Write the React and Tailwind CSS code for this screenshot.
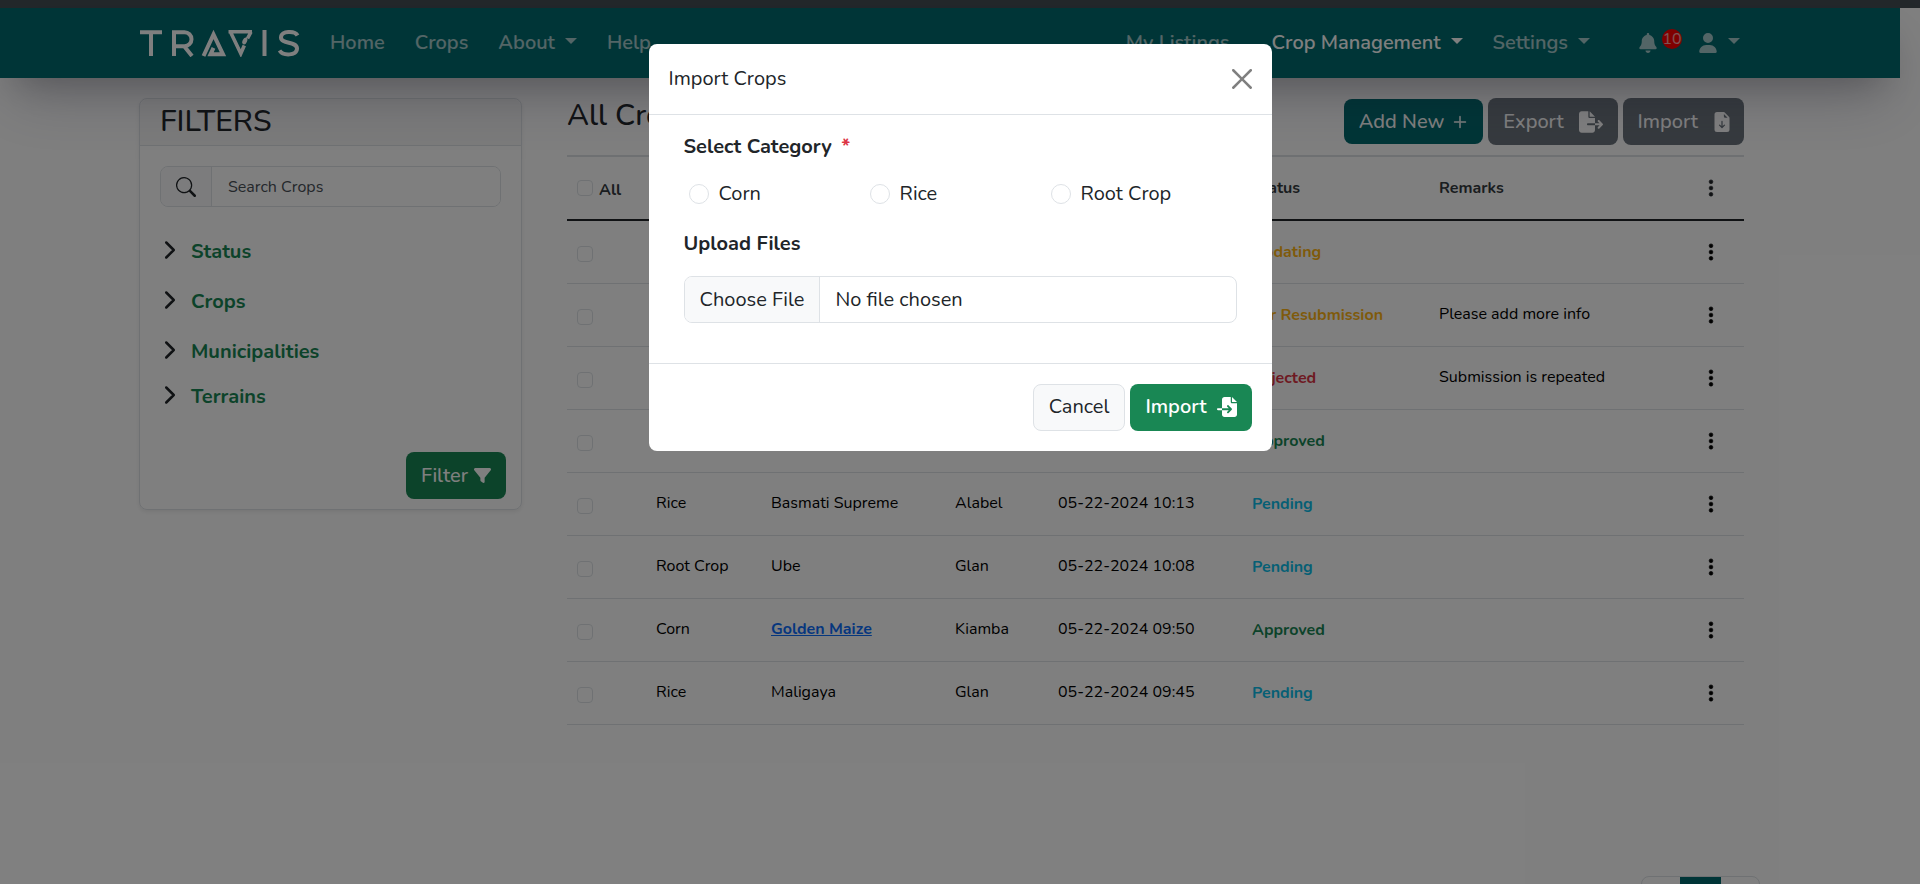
import { FaBell, FaUser, FaFilter, FaFileExport, FaFileImport } from "react-icons/fa6";
import { BsSearch, BsChevronRight, BsThreeDotsVertical, BsPlusLg, BsFileEarmarkArrowDownFill } from "react-icons/bs";

const rows = [
  { status: "Updating" },
  { status: "For Resubmission", remarks: "Please add more info" },
  { status: "Rejected", remarks: "Submission is repeated" },
  { status: "Approved" },
  { crop: "Rice", name: "Basmati Supreme", place: "Alabel", date: "05-22-2024 10:13", status: "Pending" },
  { crop: "Root Crop", name: "Ube", place: "Glan", date: "05-22-2024 10:08", status: "Pending" },
  { crop: "Corn", name: "Golden Maize", place: "Kiamba", date: "05-22-2024 09:50", status: "Approved", link: true },
  { crop: "Rice", name: "Maligaya", place: "Glan", date: "05-22-2024 09:45", status: "Pending" },
];

const statusColor = {
  Updating: "text-[#ffb514]",
  "For Resubmission": "text-[#ffb514]",
  Rejected: "text-[#dc3545]",
  Approved: "text-[#198754]",
  Pending: "text-[#0dbeea]",
};

const check = "block size-4 appearance-none rounded border border-[#dee2e6] bg-white";
const cell = "pb-0.5 pl-2.5";

function Caret() {
  return <span className="mb-1 border-x-6 border-t-6 border-x-transparent border-t-current" />;
}

function Logo() {
  return (
    <svg width="160" height="28" viewBox="0 0 160 28" fill="none" stroke="#fff" strokeWidth="4" role="img" aria-label="Travis">
      <path d="M0 3.200H22M11 3V27M34 27V3.200H44.500a6.300 6.300 0 0 1 0 14H34M44 17l8 10" />
      <path d="M63.500 27L73.500 5.500 83 25.300H70.500l3-6.500" />
      <path d="M88.500 2.800H112M90.500 3L100.800 24.500l3.500-8M111 3l-3.500 6.500" strokeWidth="3.600" />
      <ellipse cx="104.800" cy="12" rx="2.200" ry="3.600" transform="rotate(25 104.800 12)" fill="#fff" stroke="none" />
      <path d="M124.500 1V27M157.500 6.500C155 1.500 141 1.500 141 8.500c0 7 16 3.500 16 11 0 7.500-14 7.500-17.500 2" />
    </svg>
  );
}

function CloseIcon() {
  return (
    <svg viewBox="0 0 16 16" fill="currentColor" className="size-5" aria-hidden="true">
      <path d="M.293.293a1 1 0 0 1 1.414 0L8 6.586 14.293.293a1 1 0 1 1 1.414 1.414L9.414 8l6.293 6.293a1 1 0 0 1-1.414 1.414L8 9.414l-6.293 6.293a1 1 0 0 1-1.414-1.414L6.586 8 .293 1.707a1 1 0 0 1 0-1.414z" />
    </svg>
  );
}

function Navbar() {
  return (
    <nav className="relative mr-5 flex h-[70px] items-center bg-[#006a6e] pr-40 pl-[140px] text-xl font-semibold text-white/65 shadow-[0_30px_60px_-12px_rgba(50,50,93,0.25),0_18px_36px_-18px_rgba(0,0,0,0.3)]">
      <a href="#home" className="mr-[30px]"><Logo /></a>
      <div className="flex grow items-center gap-[30px]">
        <a href="#home">Home</a>
        <a href="#crops">Crops</a>
        <a href="#about" className="flex items-center gap-2.5">About <Caret /></a>
        <a href="#help">Help</a>
      </div>
      <div className="flex items-center gap-[30px]">
        <a href="#listings" className="mr-3">My Listings</a>
        <a href="#management" className="flex items-center gap-2.5 text-white">Crop Management <Caret /></a>
        <a href="#settings" className="mr-12 flex items-center gap-2.5">Settings <Caret /></a>
      </div>
      <div className="flex items-center gap-4">
        <a href="#alerts" aria-label="Notifications" className="flex gap-1">
          <FaBell className="size-5" />
          <span className="-mt-1 flex size-5 items-center justify-center rounded-full bg-[#ff0000] text-base font-normal">10</span>
        </a>
        <a href="#account" aria-label="Account" className="flex items-center gap-2.5"><FaUser className="size-5" /><Caret /></a>
      </div>
    </nav>
  );
}

function Filters() {
  return (
    <aside className="h-[412px] w-[383px] shrink-0 rounded-lg border border-[#dee2e6] shadow-[0_2px_4px_rgba(0,0,0,0.075)]">
      <h2 className="h-[47px] rounded-t-lg border-b border-[#dee2e6] bg-black/3 px-5 text-[30px] leading-[46px] font-medium">FILTERS</h2>
      <form>
        <div className="mx-5 mt-5 flex h-[41px] overflow-hidden rounded-lg border border-[#dee2e6]">
          <label htmlFor="search" aria-label="Search" className="flex w-[51px] items-center justify-center border-r border-[#dee2e6] bg-[#f8f9fa]">
            <BsSearch className="size-5" />
          </label>
          <input id="search" placeholder="Search Crops" className="min-w-0 grow bg-white px-4 text-base placeholder:text-[#495057]" />
        </div>
        <div className="mx-5 mt-[30px] flex flex-col items-start text-xl leading-[30px] font-bold text-[#198754]">
          {["Status", "Crops", "Municipalities", "Terrains"].map((t) => (
            <button type="button" key={t} className="mb-5 flex items-center gap-[11px] last:-mt-[5px]">
              <BsChevronRight className="mb-1 size-5 stroke-1 text-[#212529]" />{t}
            </button>
          ))}
        </div>
        <div className="mt-5 flex justify-end px-[15px]">
          <button type="button" className="flex h-[47px] items-center gap-1.5 rounded-lg bg-[#198754] px-[15px] text-xl font-medium text-white">
            Filter <FaFilter className="size-[17px]" />
          </button>
        </div>
      </form>
    </aside>
  );
}

function Listing() {
  return (
    <main className="min-w-0 grow">
      <div className="flex h-[59px] items-start justify-between border-b-2 border-[#dee2e6]">
        <h1 className="text-[30px] leading-9 font-medium">All Crops</h1>
        <div className="flex items-center gap-[5px] text-xl text-white">
          <button className="flex h-[45px] items-center gap-2 rounded-lg bg-[#006a6e] px-[15px] font-medium">Add New <BsPlusLg className="size-4 stroke-[0.5]" /></button>
          <button className="flex h-[47px] items-center gap-[15px] rounded-lg bg-[#6c757d] px-[15px] font-medium">Export <FaFileExport className="size-6" /></button>
          <button className="flex h-[47px] items-center gap-3.5 rounded-lg bg-[#6c757d] pr-3 pl-[15px] font-medium">Import <BsFileEarmarkArrowDownFill className="size-5" /></button>
        </div>
      </div>
      <table className="w-full table-fixed border-collapse text-left text-base text-black">
        <colgroup>
          <col className="w-[79px]" />
          <col className="w-[115px]" />
          <col className="w-[184px]" />
          <col className="w-[103px]" />
          <col className="w-[194px]" />
          <col className="w-[187px]" />
          <col />
          <col className="w-[54px]" />
        </colgroup>
        <thead>
          <tr className="h-[63px] border-b-2 border-[#212529] text-[#343a40]">
            <th className="pl-2.5 font-bold">
              <label className="flex items-center gap-1.5"><input type="checkbox" className={check} /><span className="pt-1">All</span></label>
            </th>
            <td colSpan={4} />
            <th className="pl-2.5 font-bold">Status</th>
            <th className="pl-2.5 font-bold">Remarks</th>
            <th className="pl-[11px] text-[#212529]"><BsThreeDotsVertical className="size-5 stroke-[0.5]" aria-label="Actions" /></th>
          </tr>
        </thead>
        <tbody>
          {rows.map((r, i) => (
            <tr key={i} className="h-[63px] border-b border-[#dee2e6]">
              <td className="pt-1 pl-2.5"><input type="checkbox" aria-label="Select row" className={check} /></td>
              <td className={cell}>{r.crop}</td>
              <td className={cell}>
                {r.link ? <a href="#maize" className="font-bold text-[#0d6efd] underline">{r.name}</a> : r.name}
              </td>
              <td className={cell}>{r.place}</td>
              <td className={cell}>{r.date}</td>
              <td className={"pl-2.5 font-bold whitespace-nowrap " + statusColor[r.status]}>{r.status}</td>
              <td className={cell}>{r.remarks}</td>
              <td className="pl-[11px]"><button aria-label="Row actions" className="block"><BsThreeDotsVertical className="size-5 stroke-[0.5]" /></button></td>
            </tr>
          ))}
        </tbody>
      </table>
    </main>
  );
}

function Modal() {
  return (
    <div role="dialog" aria-label="Import Crops" className="w-[623px] rounded-lg bg-white text-xl">
      <header className="flex h-[71px] items-center justify-between border-b border-[#dee2e6] px-5">
        <h2>Import Crops</h2>
        <button aria-label="Close" className="text-black/50"><CloseIcon /></button>
      </header>
      <form>
        <div className="px-[35px] pt-[17px] pb-10">
          <fieldset>
            <legend className="leading-[30px] font-bold">Select Category <span className="ml-1 font-bold text-[#dc3545]">*</span></legend>
            <div className="mt-[17px] flex pl-[5px]">
              {["Corn", "Rice", "Root Crop"].map((t) => (
                <label key={t} className="flex w-[181px] items-center gap-2.5 leading-[30px]">
                  <input type="radio" name="category" className="size-5 appearance-none rounded-full border border-[#dee2e6]" />{t}
                </label>
              ))}
            </div>
          </fieldset>
          <label htmlFor="file" className="mt-5 block leading-[30px] font-bold">Upload Files</label>
          <input id="file" type="file" className="mt-[17px] block h-[47px] w-full rounded-lg border border-[#dee2e6] leading-[45px] file:mr-[15px] file:h-[45px] file:border-r file:border-[#dee2e6] file:bg-[#f8f9fa] file:px-[15px] file:text-[#212529]" />
        </div>
        <footer className="flex justify-end gap-[5px] border-t border-[#dee2e6] p-5">
          <button type="button" className="h-[47px] rounded-lg border border-[#dee2e6] bg-[#f8f9fa] px-[15px] pb-0.5">Cancel</button>
          <button type="button" className="flex h-[47px] items-center gap-2.5 rounded-lg bg-[#198754] px-[15px] pb-0.5 font-semibold text-white">Import <FaFileImport className="size-5" /></button>
        </footer>
      </form>
    </div>
  );
}

export default function App() {
  return (
    <div className="relative h-screen overflow-hidden bg-white font-['Nunito','Lato',sans-serif] text-[#212529]">
      <div className="h-2 bg-[#464f56]" />
      <Navbar />
      <div className="flex items-start gap-[45px] pt-5 pr-[176px] pl-[139px]">
        <Filters />
        <Listing />
      </div>
      <nav aria-label="Pages" className="mt-[151px] mr-40 flex justify-end">
        <div className="flex h-11 w-[119px] overflow-hidden rounded-lg border border-[#dee2e6]">
          <button className="grow" aria-label="Previous" />
          <button className="w-[41px] bg-[#006a6e]" aria-label="Current page" />
          <button className="grow" aria-label="Next" />
        </div>
      </nav>
      <div className="absolute inset-0 flex items-start justify-center bg-black/50 pt-11">
        <Modal />
      </div>
    </div>
  );
}
